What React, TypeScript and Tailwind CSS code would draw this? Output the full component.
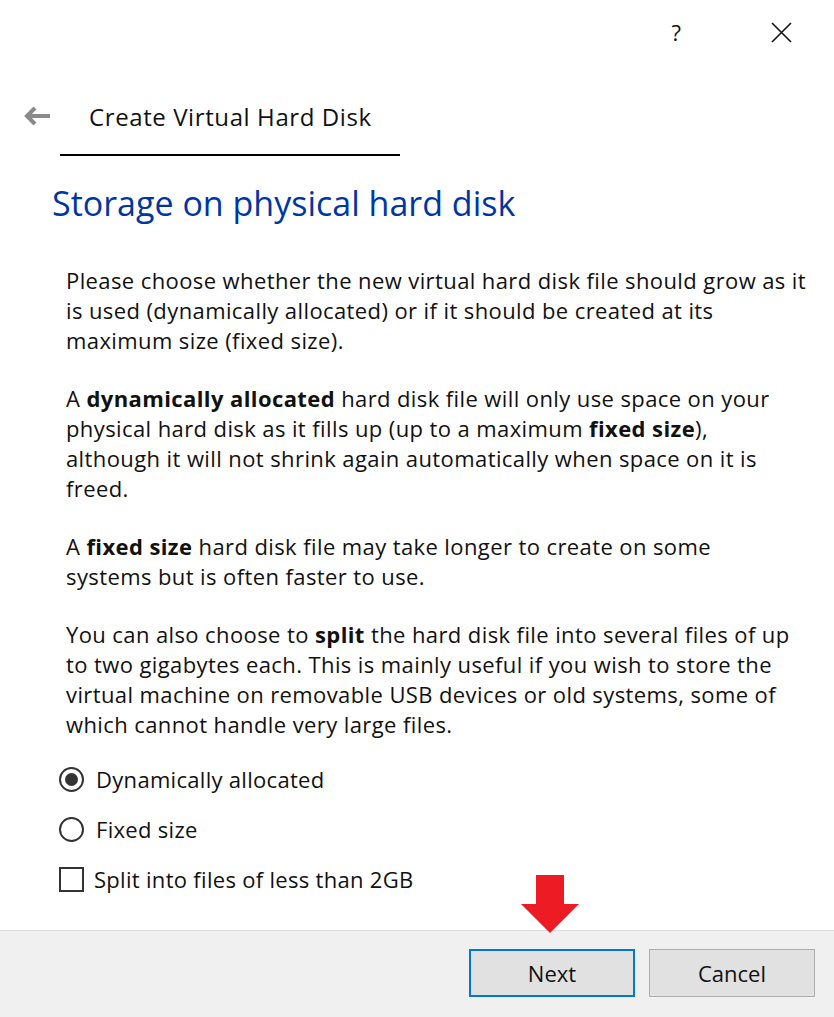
import React from 'react';

const font = { fontFamily: '"Open Sans", "Noto Sans", sans-serif' };

function Radio({ checked }: { checked?: boolean }) {
  return (
    <span className="flex h-[25px] w-[25px] items-center justify-center rounded-full border-2 border-[#333]">
      {checked && <span className="h-[13px] w-[13px] rounded-full bg-[#333]" />}
    </span>
  );
}

export default function App() {
  return (
    <div className="relative h-[1017px] w-[834px] overflow-hidden bg-white text-black" style={font}>
      {/* title bar */}
      <div className="flex h-[64px] items-center justify-end">
        <span className="mr-[90px] text-[22px] leading-none text-[#111]">?</span>
        <svg width="21" height="21" viewBox="0 0 21 21" className="mr-[42px]">
          <path d="M1 1 L20 20 M20 1 L1 20" stroke="#111" strokeWidth="1.6" />
        </svg>
      </div>

      {/* header */}
      <div className="flex items-center pt-[38px]">
        <svg width="28" height="22" viewBox="0 0 28 22" className="ml-[23px]">
          <path d="M12 2 L4 10 L12 18" stroke="#8a8a8a" strokeWidth="4" fill="none" />
          <path d="M5 10 H27" stroke="#8a8a8a" strokeWidth="4" />
        </svg>
        <span className="ml-[38px] text-[24px] leading-[30px] tracking-[0.6px] text-[#111]">
          Create Virtual Hard Disk
        </span>
      </div>
      <div className="ml-[60px] mt-[22px] h-[2px] w-[340px] bg-black" />

      <h1 className="ml-[52px] mt-[24px] text-[34px] leading-[46px] text-[#0035a5]">Storage on physical hard disk</h1>

      {/* body text */}
      <div className="ml-[66px] mt-[39px] flex flex-col gap-[28px] whitespace-nowrap text-[22px] leading-[30px] tracking-[0.4px] text-[#111]">
        <p>
          Please choose whether the new virtual hard disk file should grow as it<br />
          is used (dynamically allocated) or if it should be created at its<br />
          maximum size (fixed size).
        </p>
        <p>
          A <b>dynamically allocated</b> hard disk file will only use space on your<br />
          physical hard disk as it fills up (up to a maximum <b>fixed size</b>),<br />
          although it will not shrink again automatically when space on it is<br />
          freed.
        </p>
        <p>
          A <b>fixed size</b> hard disk file may take longer to create on some<br />
          systems but is often faster to use.
        </p>
        <p>
          You can also choose to <b>split</b> the hard disk file into several files of up<br />
          to two gigabytes each. This is mainly useful if you wish to store the<br />
          virtual machine on removable USB devices or old systems, some of<br />
          which cannot handle very large files.
        </p>
      </div>

      {/* options */}
      <div className="ml-[59px] mt-[25px] flex flex-col gap-[20px] text-[22px] leading-[30px] tracking-[0.3px] text-[#111]">
        <label className="flex items-center gap-[12px]">
          <Radio checked />
          <span>Dynamically allocated</span>
        </label>
        <label className="flex items-center gap-[12px]">
          <Radio />
          <span>Fixed size</span>
        </label>
        <label className="flex items-center gap-[10px]">
          <span className="h-[25px] w-[25px] border-2 border-[#333]" />
          <span>Split into files of less than 2GB</span>
        </label>
      </div>

      {/* footer */}
      <div className="absolute bottom-0 left-0 right-0 flex h-[87px] items-start justify-end gap-[14px] border-t border-[#dadada] bg-[#f0f0f0] pr-[19px] pt-[18px]">
        <button className="h-[48px] w-[166px] border-2 border-[#0078d7] bg-[#e1e1e1] text-[22px] text-[#111]">Next</button>
        <button className="h-[48px] w-[166px] border border-[#adadad] bg-[#e1e1e1] text-[22px] text-[#111]">Cancel</button>
      </div>

      {/* red arrow pointing at Next */}
      <svg width="60" height="58" viewBox="0 0 60 58" className="absolute left-[520px] top-[875px]">
        <path d="M16 0 H44 V29 H59 L30 58 L1 29 H16 Z" fill="#ed1c24" />
      </svg>
    </div>
  );
}
